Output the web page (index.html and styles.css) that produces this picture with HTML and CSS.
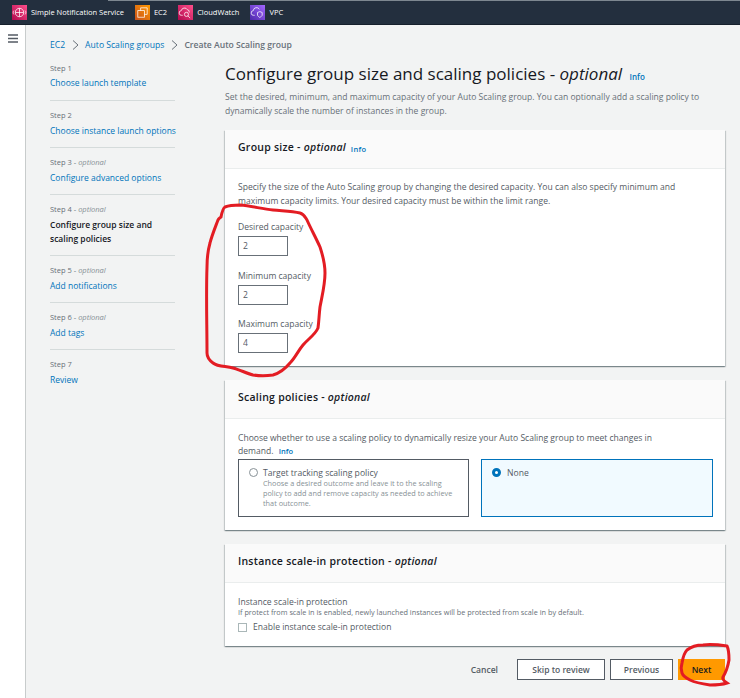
FILE: index.html
```html
<!DOCTYPE html>
<html>
<head>
<title>Create Auto Scaling group</title>
<link rel="stylesheet" href="styles.css">
</head>
<body>
<header class="topbar">
  <span class="svc"><span class="svc-icon pink"><svg viewBox="0 0 16 16"><circle cx="8" cy="8" r="4.500"/><path d="M8 3.500v9M3.500 8h9M2 6c-1 1-1 3 0 4M14 6c1 1 1 3 0 4"/></svg></span>Simple Notification Service</span>
  <span class="svc"><span class="svc-icon orange"><svg viewBox="0 0 16 16"><path d="M6 6V3h7v7h-3"/><rect x="3" y="6" width="7" height="7"/></svg></span>EC2</span>
  <span class="svc"><span class="svc-icon pink"><svg viewBox="0 0 16 16"><path d="M5 11H4a2.500 2.500 0 0 1-.5-5A3.500 3.500 0 0 1 10 5a2.500 2.500 0 0 1 2 3"/><circle cx="9" cy="10" r="2.200"/><path d="M10.500 11.500L13 14"/></svg></span>CloudWatch</span>
  <span class="svc"><span class="svc-icon purple"><svg viewBox="0 0 16 16"><path d="M5 11H4a2.500 2.500 0 0 1-.5-5A3.500 3.500 0 0 1 10 4.500"/><path d="M8 8l2.500-1L13 8v3l-2.500 2.500L8 11z"/></svg></span>VPC</span>
</header>

<div class="shell">
  <aside class="rail">
    <svg class="burger" viewBox="0 0 10 9"><path d="M0 1h10M0 4.500h10M0 8h10"/></svg>
  </aside>

  <main class="main">
    <nav class="crumbs">
      <a href="#">EC2</a>
      <svg class="chev" viewBox="0 0 7 10"><path d="M1 .5L6 5 1 9.500"/></svg>
      <a href="#">Auto Scaling groups</a>
      <svg class="chev" viewBox="0 0 7 10"><path d="M1 .5L6 5 1 9.500"/></svg>
      <span class="here">Create Auto Scaling group</span>
    </nav>

    <div class="columns">
      <ol class="steps">
        <li class="step"><small>Step 1</small><a href="#">Choose launch template</a></li>
        <li class="step"><small>Step 2</small><a href="#">Choose instance launch options</a></li>
        <li class="step"><small>Step 3 - <i>optional</i></small><a href="#">Configure advanced options</a></li>
        <li class="step"><small>Step 4 - <i>optional</i></small><b>Configure group size and scaling policies</b></li>
        <li class="step"><small>Step 5 - <i>optional</i></small><a href="#">Add notifications</a></li>
        <li class="step"><small>Step 6 - <i>optional</i></small><a href="#">Add tags</a></li>
        <li class="step"><small>Step 7</small><a href="#">Review</a></li>
      </ol>

      <div class="content">
        <h1>Configure group size and scaling policies - <i>optional</i> <a class="info" href="#">Info</a></h1>
        <p class="lead">Set the desired, minimum, and maximum capacity of your Auto Scaling group. You can optionally add a scaling policy to dynamically scale the number of instances in the group.</p>

        <section class="card">
          <h2>Group size - <i>optional</i> <a class="info" href="#">Info</a></h2>
          <div class="card-body size-body">
            <p>Specify the size of the Auto Scaling group by changing the desired capacity. You can also specify minimum and maximum capacity limits. Your desired capacity must be within the limit range.</p>
            <label class="field">Desired capacity<input type="text" value="2"></label>
            <label class="field">Minimum capacity<input type="text" value="2"></label>
            <label class="field">Maximum capacity<input type="text" value="4"></label>
          </div>
        </section>

        <section class="card">
          <h2>Scaling policies - <i>optional</i></h2>
          <div class="card-body policy-body">
            <p>Choose whether to use a scaling policy to dynamically resize your Auto Scaling group to meet changes in demand. <a class="info" href="#">Info</a></p>
            <div class="tiles">
              <div class="tile">
                <span class="radio"></span>
                <div><div class="tile-title">Target tracking scaling policy</div>
                <div class="tile-desc">Choose a desired outcome and leave it to the scaling policy to add and remove capacity as needed to achieve that outcome.</div></div>
              </div>
              <div class="tile selected">
                <span class="radio on"></span>
                <div class="tile-title">None</div>
              </div>
            </div>
          </div>
        </section>

        <section class="card">
          <h2>Instance scale-in protection - <i>optional</i></h2>
          <div class="card-body protect-body">
            <div class="prot-label">Instance scale-in protection</div>
            <div class="prot-desc">If protect from scale in is enabled, newly launched instances will be protected from scale in by default.</div>
            <div class="check"><span class="box"></span>Enable instance scale-in protection</div>
          </div>
        </section>

        <div class="actions">
          <a class="btn-link" href="#">Cancel</a>
          <button class="btn skip">Skip to review</button>
          <button class="btn prev">Previous</button>
          <button class="btn primary">Next</button>
        </div>
      </div>
    </div>
  </main>
</div>

<!-- marker scribbles drawn over the screenshot -->
<svg class="scribble" viewBox="0 0 740 698">
  <path d="M221 217C222 212 223 208 225 207C230 205 235 205 240 205C252 206 262 209 273 210C283 211 292 211 300 213C304 214 305 217 307 220C311 229 316 238 320 247C323 256 325 264 325 273C325 285 322 296 320 307C319 315 319 321 318 328C315 335 308 339 303 345C298 351 295 358 290 363C285 369 280 373 273 375C266 376 260 376 253 375C246 373 240 370 233 368C226 366 218 367 213 363C209 360 207 357 207 353C207 325 206 295 207 267C207 258 208 250 210 243C212 235 215 228 218 220C219 218 220 218 221 217Z"/>
  <path d="M682 663C683 657 684 653 687 650C692 646 698 645 703 645C711 644 720 645 727 646C729 650 729 655 729 660C728 666 726 672 723 677C722 679 724 681 727 683C721 685 715 685 710 685C703 684 696 683 690 680C686 678 683 676 682 673C681 670 681 666 682 663Z"/>
</svg>
</body>
</html>
```

FILE: styles.css
```css
html,body {margin:0; padding:0; height:100%; overflow:hidden;}
body {font:8.550px/14px "Open Sans", "Noto Sans", sans-serif; color:#545b64; background:#f2f3f3;}
a {color:#0073bb; text-decoration:none;}
ol {list-style:none; margin:0; padding:0;}

.topbar {display:flex; align-items:center; height:25px; box-sizing:border-box; padding-left:12px; gap:11px; background:#232f3e; color:#fff; font-size:7.500px; border-bottom:1px solid #16202c;}
.topbar::before {content:""; position:absolute; left:108px; right:0; top:0; height:1px; background:#7d8790;}
.svc {display:flex; align-items:center; gap:4px;}
.svc-icon {display:block; width:15px; height:15px;}
.svc-icon svg {display:block; width:15px; height:15px; fill:none; stroke:#fff; stroke-width:.8;}
.pink {background:linear-gradient(45deg, #b0084d, #ff4f8b);}
.orange {background:linear-gradient(45deg, #c8511b, #ff9900);}
.purple {background:linear-gradient(45deg, #4d27aa, #a166ff);}

.shell {display:flex; height:673px;}
.rail {width:25px; background:#fff; border-right:1px solid #c8cccc; flex:none;}
.burger {display:block; width:10px; height:9px; margin:9px 0 0 8px; fill:none; stroke:#545b64; stroke-width:1.400;}

.main {flex:1; padding:0 15px 0 24px; min-width:0;}
.crumbs {display:flex; align-items:center; height:14px; margin-top:13px; gap:6.500px; font-size:8.600px;}
.crumbs .here {font-weight:600; color:#687078;}
.chev {width:7px; height:10px; fill:none; stroke:#687078; stroke-width:1;}

.columns {display:flex; margin-top:9px;}
.steps {width:125px; margin-right:50px; flex:none;}
.step {padding-bottom:9px; margin-bottom:7px; border-bottom:1px solid #d5dbdb;}
.step:first-child {padding-bottom:10px;}
.step:last-child {border-bottom:none;}
.step small {display:block; font-size:7.500px; line-height:14px; color:#687078; margin-bottom:2px;}
.step:first-child small {margin-bottom:1px;}
.step small i {color:#879196;}
.step a, .step b {display:block; font-size:8.500px; line-height:14px;}
.step a {white-space:nowrap;}
.step b {font-weight:600; color:#16191f;}

.content {width:500px; flex:none; margin-top:1px;}
h1 {margin:0; font-size:17px; line-height:24px; font-weight:400; color:#16191f;}
h1 .info {font-size:8px; margin-left:3px;}
.lead {margin:4px 0 12px; line-height:14px; color:#687078;}
.info {font-size:7.500px; font-weight:600; line-height:10px;}
.card h2 .info {margin-left:2px; vertical-align:-1px;}

.card {background:#fff; margin-bottom:14px; box-shadow:0 1px 1px 0 rgba(0,28,36,.3), 1px 1px 1px 0 rgba(0,28,36,.15), -1px 1px 1px 0 rgba(0,28,36,.15);}
.card h2 {margin:0; height:39px; line-height:34px; padding-left:13px; font-size:10.500px; font-weight:600; color:#16191f; background:#fafafa; border-bottom:1px solid #eaeded; box-sizing:border-box; letter-spacing:.25px;}
.card h2 i {font-weight:600;}
.card-body p {margin:0;}
.card-body {padding:0 13px;}

.size-body {height:197px; padding-top:11px; box-sizing:border-box;}
.size-body p {margin-bottom:12px;}
.field {display:block; margin-bottom:12.500px; line-height:14px;}
.field input {display:block; width:50px; height:20px; box-sizing:border-box; margin-top:2px; padding:0 4px; border:1px solid #687078; font:8.600px "Open Sans", sans-serif; color:#545b64; border-radius:0; background:#fff;}

.policy-body {height:111px; padding-top:13px; box-sizing:border-box; line-height:13px;}
.policy-body p {padding-right:40px;}
.policy-body .info {margin-left:3px;}
.tiles {display:grid; grid-template-columns:231px 232px; gap:12px; margin-top:1px;}
.tile {display:flex; gap:5px; height:58px; box-sizing:border-box; padding:8px 10px; border:1px solid #545b64;}
.tile.selected {background:#f1faff; border-color:#0073bb;}
.tile-title {font-size:8.600px; line-height:10px; color:#545b64;}
.tile-desc {font-size:7.300px; line-height:10px; color:#879196;}
.radio {flex:none; width:7px; height:7px; margin-top:0; border:1px solid #879196; border-radius:50%; background:#fff;}
.radio.on {width:3px; height:3px; border:3px solid #0073bb; margin-right:1px;}

.protect-body {height:63px; padding-top:14px; box-sizing:border-box;}
.prot-label {line-height:11px;}
.prot-desc {font-size:7.300px; line-height:11px; margin-top:-1px; color:#687078;}
.check {display:flex; align-items:center; gap:6px; margin-top:4px; line-height:11px;}
.box {width:7px; height:7px; border:1px solid #aab7b8; background:#fff;}

.actions {display:flex; justify-content:flex-end; align-items:center; gap:5px; margin-top:-1px;}
.btn {height:21px; padding:0; box-sizing:border-box; border:1px solid #545b64; background:#fff; color:#545b64; font:600 8.500px "Open Sans", sans-serif; border-radius:0;}
.skip {width:88px;}
.prev {width:63px;}
.btn.primary {width:47px; border:none; background:#ff9900; color:#16191f;}
.btn-link {color:#545b64; font-weight:600; margin-right:14px;}

.scribble {position:absolute; left:0; top:0; width:740px; height:698px; fill:none; stroke:#e31c23; stroke-width:3; pointer-events:none;}
```
